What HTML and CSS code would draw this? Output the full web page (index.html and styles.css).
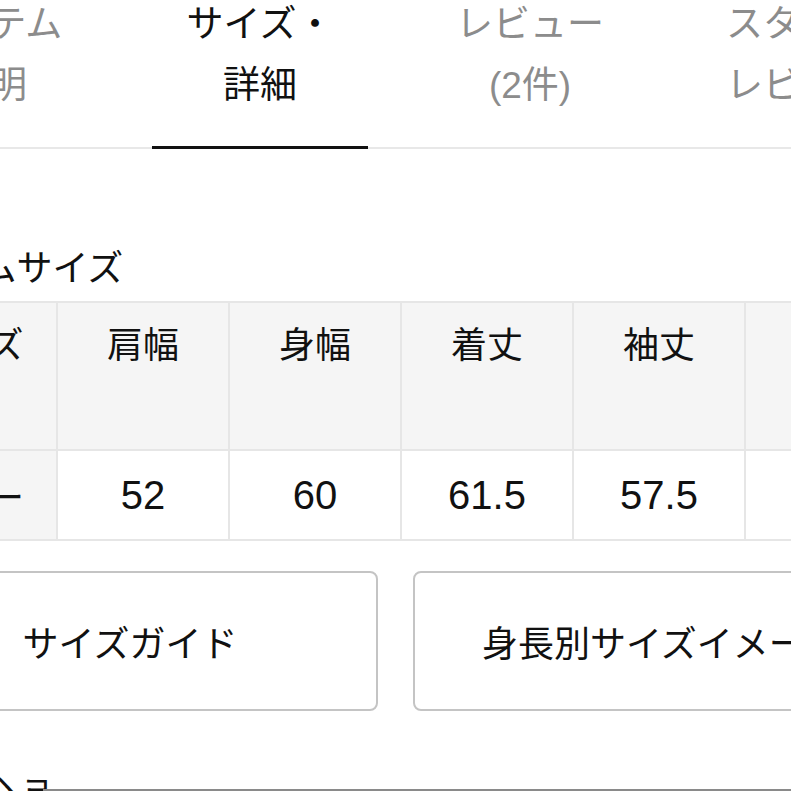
FILE: index.html
```html
<!DOCTYPE html>
<html lang="ja">
<head>
<meta charset="utf-8">
<title>サイズ・詳細</title>
<link rel="stylesheet" href="styles.css">
</head>
<body>
<div class="page">
  <nav class="tabs">
    <div class="tab"><span class="tab-label">アイテム<br>説明</span><span class="ind"></span></div>
    <div class="tab active"><span class="tab-label">サイズ・<br>詳細</span><span class="ind"></span></div>
    <div class="tab"><span class="tab-label">レビュー<br>(2件)</span><span class="ind"></span></div>
    <div class="tab"><span class="tab-label">スタッフ<br>レビュー</span><span class="ind"></span></div>
  </nav>
  <section class="size">
    <h2 class="title">アイテムサイズ</h2>
    <table class="size-table">
      <colgroup>
        <col class="c-first"><col class="c"><col class="c"><col class="c"><col class="c"><col class="c">
      </colgroup>
      <thead>
        <tr><th>サイズ</th><th>肩幅</th><th>身幅</th><th>着丈</th><th>袖丈</th><th>裾幅</th></tr>
      </thead>
      <tbody>
        <tr><th>フリー</th><td>52</td><td>60</td><td>61.5</td><td>57.5</td><td>56</td></tr>
      </tbody>
    </table>
    <div class="buttons">
      <a class="btn">サイズガイド</a>
      <a class="btn">身長別サイズイメージ</a>
    </div>
    <h2 class="next">ヘョ</h2>
  </section>
</div>
<div class="bottom-line"></div>
</body>
</html>
```

FILE: styles.css
```css
html, body {
  margin: 0;
  padding: 0;
  background: #fff;
}
body {
  width: 791px;
  height: 791px;
  overflow: hidden;
  font-family: "Liberation Sans", "Noto Sans CJK JP", sans-serif;
  color: #111;
}
.page {
  margin-left: -145px;
}
.tabs {
  display: flex;
  margin-top: -6px;
  border-bottom: 2px solid #e8e8e8;
}
.tab {
  flex: 0 0 270px;
  display: flex;
  flex-direction: column;
  align-items: center;
  text-align: center;
  font-size: 37px;
  line-height: 61px;
  color: #8c8c8c;
}
.tab.active {
  color: #111;
}
.tab-label {
  display: block;
  margin-bottom: 30px;
}
.ind {
  display: block;
  width: 216px;
  height: 3px;
  margin-bottom: -2px;
}
.tab.active .ind {
  background: #111;
}
.size {
  padding-left: 27px;
}
.title {
  margin: 95px 0 7px -6px;
  font-size: 36px;
  line-height: 50px;
  font-weight: normal;
  color: #111;
}
.size-table {
  border-collapse: collapse;
  table-layout: fixed;
  width: 1034px;
  border: 2px solid #e6e6e6;
}
.c-first { width: 174px; }
.c { width: 172px; }
.size-table th,
.size-table td {
  border: 2px solid #e6e6e6;
  text-align: center;
  font-weight: normal;
  padding: 0;
}
.size-table thead th {
  background: #f5f5f5;
  height: 148px;
  vertical-align: top;
  font-size: 36px;
  line-height: 50px;
  padding-top: 18px;
  box-sizing: border-box;
}
.size-table tbody th,
.size-table tbody td {
  height: 88px;
  vertical-align: middle;
}
.size-table tbody th {
  background: #f5f5f5;
  font-size: 36px;
}
.size-table tbody td {
  background: #fff;
  font-size: 40px;
}
.buttons {
  display: flex;
  gap: 35px;
  margin-top: 30px;
}
.btn {
  flex: 0 0 496px;
  box-sizing: border-box;
  height: 140px;
  border: 2px solid #c4c4c4;
  border-radius: 8px;
  display: flex;
  align-items: center;
  justify-content: center;
  font-size: 36px;
  color: #111;
  white-space: nowrap;
}
.next {
  margin: 59px 0 0 101px;
  font-size: 36px;
  line-height: 36px;
  font-weight: normal;
  color: #111;
}
.bottom-line {
  position: fixed;
  left: 43px;
  right: 0;
  top: 789px;
  height: 2px;
  background: #8a8a8a;
}
```
